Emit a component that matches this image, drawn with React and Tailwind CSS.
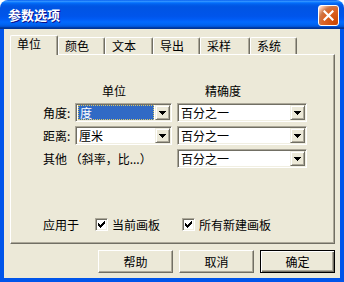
import React from 'react';

const tabs = [
    { label: '单位', w: 'w-[48px]', active: true },
    { label: '颜色', w: 'w-[47px]' },
    { label: '文本', w: 'w-[48px]' },
    { label: '导出', w: 'w-[47px]' },
    { label: '采样', w: 'w-[50px]' },
    { label: '系统', w: 'w-[47px]' },
];

const Arrow = () => (
    <svg width="7" height="4" viewBox="0 0 7 4" shapeRendering="crispEdges">
        <path d="M0 0h7v1h-1v1h-1v1h-1v1h-1v-1h-1v-1h-1v-1h-1z" fill="#000" />
    </svg>
);

const Combo = ({ width, value, selected }) => (
    <div className={`${width} h-[19px] flex p-px bg-white border border-t-[#aca899] border-l-[#aca899] border-r-white border-b-white shadow-[inset_1px_1px_0_#716f64,inset_-1px_-1px_0_#f1efe2]`}>
        {selected ? (
            <div className="flex-1 mx-px flex items-center pl-px bg-[#316ac5] text-white border border-dotted border-[#d8c86a]">
                {value}
            </div>
        ) : (
            <div className="flex-1 flex items-center pl-[2px]">{value}</div>
        )}
        <div className="w-[15px] h-full flex items-center justify-center bg-[#ece9d8] border border-t-[#f1efe2] border-l-[#f1efe2] border-r-[#716f64] border-b-[#716f64] shadow-[inset_1px_1px_0_#fff,inset_-1px_-1px_0_#aca899]">
            <Arrow />
        </div>
    </div>
);

const Checkbox = () => (
    <div className="w-[13px] h-[13px] flex items-center justify-center bg-white border border-t-[#aca899] border-l-[#aca899] border-r-white border-b-white shadow-[inset_1px_1px_0_#716f64,inset_-1px_-1px_0_#f1efe2]">
        <svg width="7" height="7" viewBox="0 0 7 7" shapeRendering="crispEdges">
            <path d="M6 0h1v3h-1v1h-1v1h-1v1h-1v1h-1v-1h-1v-1h-1v-3h1v1h1v1h1v-1h1v-1h1z" fill="#000" />
        </svg>
    </div>
);

const Button = ({ children, primary }) => (
    <button
        className={
            primary
                ? 'w-[75px] h-[23px] flex items-center justify-center bg-[#ece9d8] border border-black shadow-[inset_1px_1px_0_#fff,inset_-1px_-1px_0_#716f64,inset_-2px_-2px_0_#aca899]'
                : 'w-[75px] h-[23px] flex items-center justify-center bg-[#ece9d8] border border-t-white border-l-white border-r-[#716f64] border-b-[#716f64] shadow-[inset_-1px_-1px_0_#aca899]'
        }
    >
        {children}
    </button>
);

export default function App() {
    return (
        <div className="w-[344px] h-[282px] flex flex-col bg-white font-['Noto_Sans_CJK_SC','Noto_Sans',sans-serif] text-[12px] leading-[14px] text-black select-none">
            {/* Title bar */}
            <div className="h-[29px] shrink-0 flex items-center pl-[8px] pr-[5px] rounded-t-[8px] bg-[linear-gradient(180deg,#0058ee_0%,#3593ff_4%,#288eff_6%,#127dff_8%,#036ffc_10%,#0262ee_14%,#0057e5_20%,#0054e3_24%,#0055eb_56%,#005bf5_66%,#026afe_76%,#0062ef_86%,#0052d6_92%,#0040ab_94%,#003092_100%)]">
                <span className="text-white font-bold text-[13px] leading-none [text-shadow:1px_1px_#0f1089]">参数选项</span>
                <div className="ml-auto mt-px w-[21px] h-[21px] rounded-[3px] border border-white flex items-center justify-center bg-[radial-gradient(circle_at_90%_90%,#cc4600_0%,#dc6527_55%,#cd7546_70%,#ffccb2_90%,#fff_100%)]">
                    <svg width="11" height="11" viewBox="0 0 11 11">
                        <path d="M1.5 1.5l8 8M9.5 1.5l-8 8" stroke="#fff" strokeWidth="2.2" strokeLinecap="square" />
                    </svg>
                </div>
            </div>

            {/* Body */}
            <div className="flex-1 flex flex-col bg-[#ece9d8] border-x-4 border-b-4 border-[#0055ea] pt-[6px] pl-[6px] pr-[5px] pb-[5px]">
                {/* Tabs */}
                <div className="h-[19px] flex items-end relative z-10">
                    {tabs.map((t) =>
                        t.active ? (
                            <div
                                key={t.label}
                                className={`${t.w} h-[20px] -mb-px pl-[6px] pt-px bg-[#ece9d8] border-t border-l border-white border-r border-r-[#716f64] rounded-t-[2px] shadow-[inset_-1px_0_0_#aca899]`}
                            >
                                {t.label}
                            </div>
                        ) : (
                            <div
                                key={t.label}
                                className={`${t.w} h-[17px] pl-[6px] pt-px bg-[#ece9d8] border-t border-l border-white border-r border-r-[#716f64] rounded-t-[2px] shadow-[inset_-1px_0_0_#aca899]`}
                            >
                                {t.label}
                            </div>
                        )
                    )}
                </div>

                {/* Panel */}
                <div className="h-[190px] flex flex-col pl-[32px] pt-[28px] border border-t-white border-l-white border-r-[#716f64] border-b-[#716f64] shadow-[inset_-1px_-1px_0_#aca899]">
                    <div className="grid grid-cols-[32px_102px_130px] grid-rows-[16px_19px_19px_19px] gap-y-[4px] items-center">
                        <div />
                        <div className="pl-[27px]">单位</div>
                        <div className="pl-[28px]">精确度</div>

                        <div>角度:</div>
                        <Combo width="w-[97px]" value="度" selected />
                        <Combo width="w-[130px]" value="百分之一" />

                        <div>距离:</div>
                        <Combo width="w-[97px]" value="厘米" />
                        <Combo width="w-[130px]" value="百分之一" />

                        <div className="col-span-2 whitespace-nowrap">其他 （斜率，比...）</div>
                        <Combo width="w-[130px]" value="百分之一" />
                    </div>

                    <div className="mt-[50px] h-[13px] flex items-center">
                        <span>应用于</span>
                        <div className="ml-[16px]">
                            <Checkbox />
                        </div>
                        <span className="ml-[4px]">当前画板</span>
                        <div className="ml-[22px]">
                            <Checkbox />
                        </div>
                        <span className="ml-[4px]">所有新建画板</span>
                    </div>
                </div>

                {/* Buttons */}
                <div className="mt-[6px] flex justify-end gap-[6px]">
                    <Button>帮助</Button>
                    <Button>取消</Button>
                    <Button primary>确定</Button>
                </div>
            </div>
        </div>
    );
}
